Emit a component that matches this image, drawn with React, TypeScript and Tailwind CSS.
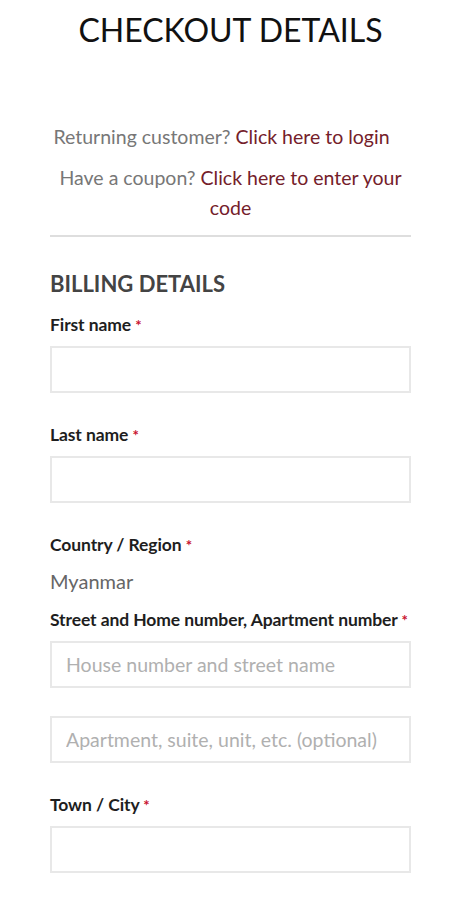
const font = { fontFamily: "Lato, 'Noto Sans', sans-serif" };

function Label({ text }: { text: string }) {
  return (
    <label className="block text-[17.5px] leading-[22px] font-bold text-[#1e1e1e] tracking-[-0.1px]">
      {text} <span className="text-[#c8102e] text-[15px]">*</span>
    </label>
  );
}

function Field({ placeholder }: { placeholder?: string }) {
  return (
    <input
      type="text"
      placeholder={placeholder}
      className="block w-full h-[47px] border-2 border-[#e8e8e8] bg-white px-[14px] text-[19.5px] text-[#333] placeholder:text-[#b0b0b0] outline-none"
    />
  );
}

export default function App() {
  return (
    <div className="min-h-[900px] bg-white" style={font}>
      <div className="px-[50px] pt-[11px]">
        <h1 className="text-center text-[32px] leading-[38px] text-[#111]">
          CHECKOUT DETAILS
        </h1>

        <p className="mt-[73px] pr-[18px] text-center text-[19.5px] leading-[30px] text-[#777]">
          Returning customer?{" "}
          <a href="#" className="text-[#74202a]">
            Click here to login
          </a>
        </p>
        <p className="mt-[11px] text-center text-[19.5px] leading-[30px] text-[#777]">
          Have a coupon?{" "}
          <a href="#" className="text-[#74202a]">
            Click here to enter your code
          </a>
        </p>

        <div className="mt-[12px] h-[2px] bg-[#dedede]" />

        <h2 className="mt-[33px] text-[22px] leading-[28px] font-bold text-[#444]">
          BILLING DETAILS
        </h2>

        <div className="mt-[16px]">
          <Label text="First name" />
          <div className="mt-[10px]">
            <Field />
          </div>
        </div>

        <div className="mt-[31px]">
          <Label text="Last name" />
          <div className="mt-[10px]">
            <Field />
          </div>
        </div>

        <div className="mt-[31px]">
          <Label text="Country / Region" />
          <div className="mt-[12px] text-[20px] leading-[26px] text-[#666]">Myanmar</div>
        </div>

        <div className="mt-[15px]">
          <Label text="Street and Home number, Apartment number" />
          <div className="mt-[10px]">
            <Field placeholder="House number and street name" />
          </div>
          <div className="mt-[28px]">
            <Field placeholder="Apartment, suite, unit, etc. (optional)" />
          </div>
        </div>

        <div className="mt-[31px]">
          <Label text="Town / City" />
          <div className="mt-[10px]">
            <Field />
          </div>
        </div>
      </div>
    </div>
  );
}
